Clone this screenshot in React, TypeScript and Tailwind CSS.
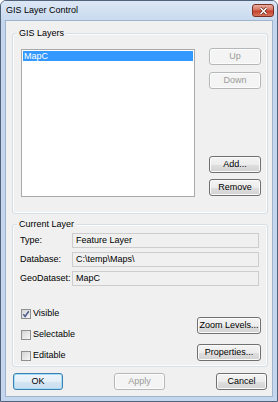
import React from 'react';

const btnBase =
  'flex items-center justify-center rounded-[3px] border text-[9px] leading-none';

const Btn: React.FC<{ label: string; disabled?: boolean; def?: boolean; className?: string }> = ({
  label,
  disabled,
  def,
  className,
}) => {
  let look =
    'border-[#707070] text-black bg-[linear-gradient(to_bottom,#f4f4f4_0%,#ececec_50%,#dfdfdf_51%,#d2d2d2_100%)] shadow-[inset_0_0_0_1px_#fbfbfb]';
  if (disabled) look = 'border-[#b5b8ba] text-[#9a9a9a] bg-[#f4f4f4] shadow-[inset_0_0_0_1px_#fcfcfc]';
  if (def)
    look =
      'border-[#3c7fb1] text-black bg-[linear-gradient(to_bottom,#eef5fa_0%,#e3eef7_50%,#d4e5f2_51%,#c9def0_100%)] shadow-[inset_0_0_0_1px_#a6dcf7]';
  return <div className={`${btnBase} ${look} ${className ?? ''}`}>{label}</div>;
};

const Check: React.FC<{ label: string; checked?: boolean }> = ({ label, checked }) => (
  <div className="flex items-center h-[10px]">
    <div className="w-[10px] h-[10px] border border-[#8e8f8f] bg-[linear-gradient(to_bottom_right,#d6d6d6,#f6f6f6)] flex items-center justify-center">
      {checked && (
        <svg width="8" height="8" viewBox="0 0 8 8">
          <path d="M1.3 4.2 L3.1 6.4 L6.8 1.2" fill="none" stroke="#4a5d8c" strokeWidth="1.5" />
        </svg>
      )}
    </div>
    <span className="ml-[2px] text-[9px] text-black">{label}</span>
  </div>
);

const Field: React.FC<{ label: string; value: string }> = ({ label, value }) => (
  <div className="flex items-center h-[15px]">
    <span className="w-[52px] text-[9px]">{label}</span>
    <div className="w-[187px] h-[15px] border border-[#cdcdcd] bg-[#f0f0f0] flex items-center pl-[3px] text-[9px]">
      {value}
    </div>
  </div>
);

const Group: React.FC<{ title: string; className?: string; children: React.ReactNode }> = ({
  title,
  className,
  children,
}) => (
  <div className={`relative w-[256px] border border-[#d5dfe5] rounded-[3px] shadow-[inset_0_0_0_1px_#fbfcfd] ${className ?? ''}`}>
    <span className="absolute -top-[6px] left-[4px] bg-[#f0f0f0] px-[2px] text-[9px] leading-[10px]">{title}</span>
    {children}
  </div>
);

export default function App() {
  return (
    <div className="w-[278px] h-[402px] flex flex-col bg-[#c4d6ee] border border-[#50637a] rounded-t-[6px] font-['Liberation_Sans',Arial,sans-serif] text-black">
      <div className="h-[19px] flex justify-between pl-[5px] pr-[3px] rounded-t-[5px] bg-[linear-gradient(to_bottom,#dce7f5,#c9daef)]">
        <span className="text-[9px] leading-[19px]">GIS Layer Control</span>
        <div className="mt-[3px] w-[22px] h-[13px] rounded-[3px] border border-[#7b2f25] bg-[linear-gradient(to_bottom,#eab0a2_0%,#d7715e_45%,#c3402b_55%,#d8745c_100%)] flex items-center justify-center">
          <svg width="9" height="8" viewBox="0 0 9 8">
            <path d="M1.5 1 L7.5 7 M7.5 1 L1.5 7" stroke="#5a2018" strokeWidth="2.6" />
            <path d="M1.5 1 L7.5 7 M7.5 1 L1.5 7" stroke="#ffffff" strokeWidth="1.5" />
          </svg>
        </div>
      </div>
      <div className="flex-1 mx-[4px] mb-[4px] border border-[#9fb4cf] bg-[#f0f0f0] flex flex-col pl-[6px]">
        <Group title="GIS Layers" className="mt-[12px] h-[181px]">
          <div className="flex pl-[8px] pt-[15px]">
            <div className="w-[174px] h-[148px] border border-[#a9a9a9] bg-white p-[1px]">
              <div className="h-[10px] bg-[#3399ff] text-white text-[9px] leading-[10px] pl-[1px]">MapC</div>
            </div>
            <div className="ml-[14px] -mt-[1px] h-[148px] flex flex-col justify-between">
              <div className="flex flex-col gap-[7px]">
                <Btn label="Up" disabled className="w-[52px] h-[17px]" />
                <Btn label="Down" disabled className="w-[52px] h-[17px]" />
              </div>
              <div className="flex flex-col gap-[6px]">
                <Btn label="Add..." className="w-[52px] h-[17px]" />
                <Btn label="Remove" className="w-[52px] h-[17px]" />
              </div>
            </div>
          </div>
        </Group>
        <Group title="Current Layer" className="mt-[10px] h-[143px]">
          <div className="flex flex-col gap-[4px] pl-[7px] pt-[8px]">
            <Field label="Type:" value="Feature Layer" />
            <Field label="Database:" value="C:\temp\Maps\" />
            <Field label="GeoDataset:" value="MapC" />
          </div>
          <div className="flex justify-between items-end pl-[8px] pr-[6px] mt-[23px]">
            <div className="flex flex-col gap-[11px]">
              <Check label="Visible" checked />
              <Check label="Selectable" />
              <Check label="Editable" />
            </div>
            <div className="flex flex-col gap-[10px]">
              <Btn label="Zoom Levels..." className="w-[64px] h-[17px]" />
              <Btn label="Properties..." className="w-[64px] h-[17px]" />
            </div>
          </div>
        </Group>
        <div className="flex justify-between mt-[6px] pl-[1px] pr-[5px]">
          <Btn label="OK" def className="w-[50px] h-[17px]" />
          <Btn label="Apply" disabled className="w-[51px] h-[17px]" />
          <Btn label="Cancel" className="w-[51px] h-[17px]" />
        </div>
      </div>
    </div>
  );
}
